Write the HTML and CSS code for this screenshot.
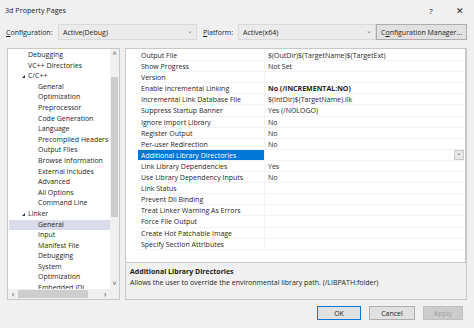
FILE: index.html
```html
<!DOCTYPE html>
<html lang="en">
<head>
    <meta charset="UTF-8">
    <title>3d Property Pages</title>
    <link rel="stylesheet" href="styles.css">
</head>
<body>
    <!-- Title bar -->
    <div class="titlebar">
        <span class="title">3d Property Pages</span>
        <span class="help">?</span>
        <span class="close">✕</span>
    </div>

    <!-- Configuration / Platform row -->
    <div class="toolbar">
        <span class="label label-config"><u>C</u>onfiguration:</span>
        <div class="combo combo-config">
            <span>Active(Debug)</span>
            <span class="chevron">⌄</span>
        </div>
        <span class="label label-platform"><u>P</u>latform:</span>
        <div class="combo combo-platform">
            <span>Active(x64)</span>
            <span class="chevron">⌄</span>
        </div>
        <button class="btn btn-manager">C<u>o</u>nfiguration Manager...</button>
    </div>

    <div class="main">
        <!-- Tree of property pages -->
        <div class="tree">
            <div class="tree-body">
                <div class="tree-items">
                    <div class="node l1">Debugging</div>
                    <div class="node l1">VC++ Directories</div>
                    <div class="node l1 open"><span class="arrow"></span>C/C++</div>
                    <div class="node l2">General</div>
                    <div class="node l2">Optimization</div>
                    <div class="node l2">Preprocessor</div>
                    <div class="node l2">Code Generation</div>
                    <div class="node l2">Language</div>
                    <div class="node l2">Precompiled Headers</div>
                    <div class="node l2">Output Files</div>
                    <div class="node l2">Browse Information</div>
                    <div class="node l2">External Includes</div>
                    <div class="node l2">Advanced</div>
                    <div class="node l2">All Options</div>
                    <div class="node l2">Command Line</div>
                    <div class="node l1 open"><span class="arrow"></span>Linker</div>
                    <div class="node l2 selected">General</div>
                    <div class="node l2">Input</div>
                    <div class="node l2">Manifest File</div>
                    <div class="node l2">Debugging</div>
                    <div class="node l2">System</div>
                    <div class="node l2">Optimization</div>
                    <div class="node l2">Embedded IDL</div>
                </div>
                <div class="vscroll">
                    <span class="sarrow">˄</span>
                    <div class="vtrack"><div class="vthumb"></div></div>
                    <span class="sarrow">˅</span>
                </div>
            </div>
            <div class="hscroll">
                <span class="sarrow">‹</span>
                <div class="htrack"><div class="hthumb"></div></div>
                <span class="sarrow">›</span>
                <span class="corner"></span>
            </div>
        </div>

        <div class="right">
            <!-- Property grid -->
            <div class="grid">
                <div class="row"><span class="gut"></span><span class="name">Output File</span><span class="val">$(OutDir)$(TargetName)$(TargetExt)</span></div>
                <div class="row"><span class="gut"></span><span class="name">Show Progress</span><span class="val">Not Set</span></div>
                <div class="row"><span class="gut"></span><span class="name">Version</span><span class="val"></span></div>
                <div class="row"><span class="gut"></span><span class="name">Enable Incremental Linking</span><span class="val bold">No (/INCREMENTAL:NO)</span></div>
                <div class="row"><span class="gut"></span><span class="name">Incremental Link Database File</span><span class="val">$(IntDir)$(TargetName).ilk</span></div>
                <div class="row"><span class="gut"></span><span class="name">Suppress Startup Banner</span><span class="val">Yes (/NOLOGO)</span></div>
                <div class="row"><span class="gut"></span><span class="name">Ignore Import Library</span><span class="val">No</span></div>
                <div class="row"><span class="gut"></span><span class="name">Register Output</span><span class="val">No</span></div>
                <div class="row"><span class="gut"></span><span class="name">Per-user Redirection</span><span class="val">No</span></div>
                <div class="row active"><span class="gut"></span><span class="name">Additional Library Directories</span><span class="val"><span class="drop">⌄</span></span></div>
                <div class="row"><span class="gut"></span><span class="name">Link Library Dependencies</span><span class="val">Yes</span></div>
                <div class="row"><span class="gut"></span><span class="name">Use Library Dependency Inputs</span><span class="val">No</span></div>
                <div class="row"><span class="gut"></span><span class="name">Link Status</span><span class="val"></span></div>
                <div class="row"><span class="gut"></span><span class="name">Prevent Dll Binding</span><span class="val"></span></div>
                <div class="row"><span class="gut"></span><span class="name">Treat Linker Warning As Errors</span><span class="val"></span></div>
                <div class="row"><span class="gut"></span><span class="name">Force File Output</span><span class="val"></span></div>
                <div class="row"><span class="gut"></span><span class="name">Create Hot Patchable Image</span><span class="val"></span></div>
                <div class="row"><span class="gut"></span><span class="name">Specify Section Attributes</span><span class="val"></span></div>
            </div>

            <!-- Description of the selected property -->
            <div class="desc">
                <div class="desc-title">Additional Library Directories</div>
                <div class="desc-text">Allows the user to override the environmental library path. (/LIBPATH:folder)</div>
            </div>
        </div>
    </div>

    <div class="buttons">
        <button class="btn btn-ok">OK</button>
        <button class="btn btn-cancel">Cancel</button>
        <button class="btn btn-apply">Apply</button>
    </div>
</body>
</html>
```

FILE: styles.css
```css
/* Dialog base */
body {
    margin: 0;
    width: 474px;
    height: 328px;
    overflow: hidden;
    background-color: #f0f0f0;
    font-family: 'Open Sans', sans-serif;
    font-size: 7px;
    color: #1e1e1e;
}

/* Title bar */
.titlebar {
    height: 20px;
    display: flex;
    align-items: center;
    padding-left: 5px;
}

.title {
    flex: 1;
    font-size: 7.2px;
}

.help {
    width: 12px;
    text-align: center;
    margin-right: 17px;
    font-size: 8px;
}

.close {
    width: 12px;
    text-align: center;
    margin-right: 8px;
    font-size: 9px;
}

/* Configuration row */
.toolbar {
    margin-top: 4px;
    height: 16px;
    display: flex;
    align-items: stretch;
    padding-left: 6px;
}

.label {
    display: flex;
    align-items: center;
}

.label-config {
    width: 52px;
}

.label-platform {
    width: 35px;
    margin-left: 6px;
}

.combo {
    display: flex;
    align-items: center;
    justify-content: space-between;
    box-sizing: border-box;
    border: 1px solid #d9d9d9;
    background-color: #ebebeb;
    padding: 0 3px 0 4px;
}

.combo-config {
    width: 139px;
}

.combo-platform {
    width: 138px;
}

.chevron {
    color: #7a7a7a;
    font-size: 7px;
    line-height: 7px;
    margin-top: -4px;
}

.btn {
    font-family: inherit;
    font-size: 7px;
    color: #1e1e1e;
    background-color: #e1e1e1;
    border: 1px solid #adadad;
    padding: 0;
    margin: 0;
    box-sizing: border-box;
}

.btn-manager {
    width: 91px;
}

/* Main area */
.main {
    margin-top: 8px;
    height: 252px;
    display: flex;
    padding-left: 7px;
}

.tree {
    width: 113px;
    box-sizing: border-box;
    border: 1px solid #c8c8c8;
    background-color: #fff;
    display: flex;
    flex-direction: column;
}

.tree-body {
    flex: 1;
    display: flex;
    overflow: hidden;
}

.tree-items {
    flex: 1;
    padding-top: 1px;
    overflow: hidden;
}

.node {
    height: 10.6px;
    line-height: 10.6px;
    white-space: nowrap;
    position: relative;
}

.l1 {
    padding-left: 20px;
}

.l2 {
    padding-left: 30px;
}

.node.selected {
    background-color: #d9dbea;
    margin-left: 1px;
    padding-left: 29px;
}

.arrow {
    position: absolute;
    left: 14px;
    top: 4px;
    width: 0;
    height: 0;
    border-left: 3px solid transparent;
    border-bottom: 3px solid #333;
}

.vscroll {
    width: 9px;
    display: flex;
    flex-direction: column;
    align-items: center;
    background-color: #f0f0f0;
}

.sarrow {
    height: 10px;
    line-height: 10px;
    font-size: 7px;
    color: #606060;
    text-align: center;
}

.vtrack {
    flex: 1;
    width: 100%;
    padding-top: 18px;
    padding-bottom: 62px;
    box-sizing: border-box;
}

.vthumb {
    height: 100%;
    background-color: #cdcdcd;
    margin: 0 1px;
}

.hscroll {
    height: 10px;
    display: flex;
    align-items: center;
    background-color: #f0f0f0;
}

.hscroll .sarrow {
    width: 10px;
    font-size: 9px;
}

.htrack {
    flex: 1;
    height: 100%;
    padding: 1px 12px 1px 0;
    box-sizing: border-box;
}

.hthumb {
    height: 100%;
    background-color: #cdcdcd;
}

.corner {
    width: 9px;
    height: 100%;
    background-color: #f0f0f0;
}

/* Right side */
.right {
    margin-left: 5px;
    width: 342px;
    display: flex;
    flex-direction: column;
}

.grid {
    height: 215px;
    box-sizing: border-box;
    border: 1px solid #c8c8c8;
    border-right: 2px solid #c8c8c8;
    background-color: #fff;
    padding-top: 1px;
}

.row {
    display: flex;
    height: 11.1px;
    line-height: 11.1px;
    white-space: nowrap;
}

.gut {
    width: 12px;
}

.name {
    width: 126px;
    padding-left: 3px;
    box-sizing: border-box;
    border-bottom: 1px solid #f3f3f3;
    overflow: hidden;
}

.val {
    flex: 1;
    padding-left: 3px;
    border-left: 1px solid #f3f3f3;
    border-bottom: 1px solid #f3f3f3;
    display: flex;
    justify-content: flex-end;
    justify-content: space-between;
}

.bold {
    font-weight: bold;
}

.row.active .name {
    background-color: #0078d7;
    color: #fff;
}

.drop {
    margin-left: auto;
    width: 10px;
    height: 10px;
    box-sizing: border-box;
    border: 1px solid #c8c8c8;
    background-color: #e8e8e8;
    color: #777;
    text-align: center;
    line-height: 4px;
    font-size: 7px;
    margin-right: 1px;
}

.desc {
    flex: 1;
    box-sizing: border-box;
    border: 1px solid #c8c8c8;
    border-top: none;
    padding: 3px 4px;
}

.desc-title {
    font-weight: bold;
    line-height: 11px;
}

.desc-text {
    line-height: 12px;
}

/* Bottom buttons */
.buttons {
    margin-top: 6px;
    display: flex;
    justify-content: flex-end;
    padding-right: 11px;
    gap: 8px;
}

.buttons .btn {
    height: 14px;
}

.btn-ok {
    width: 44px;
    border-color: #0078d7;
}

.btn-cancel {
    width: 46px;
}

.btn-apply {
    width: 40px;
    color: #a0a0a0;
    background-color: #cccccc;
    border-color: #bfbfbf;
}
```
